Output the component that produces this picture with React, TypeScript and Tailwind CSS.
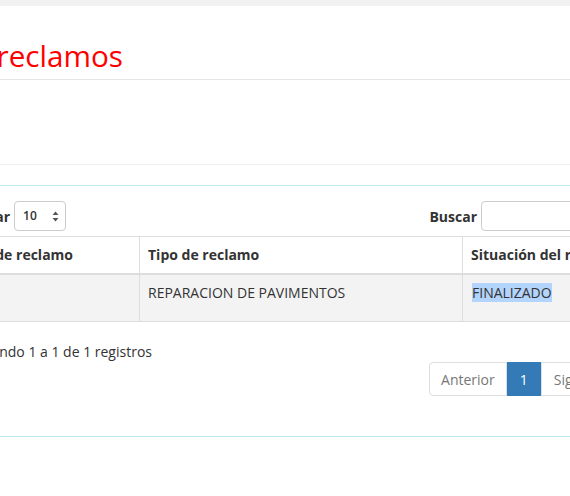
import React from 'react';

// Listado de reclamos - datatable view (cropped viewport)

const font = { fontFamily: '"Open Sans", "Liberation Sans", sans-serif' };

export default function App() {
  return (
    <div className="w-[570px] h-[496px] overflow-hidden bg-white text-[14px] text-[#333] whitespace-nowrap" style={font}>
      {/* top bar */}
      <div className="h-[6px] bg-[#f2f2f2]" />

      {/* title */}
      <div className="h-[74px] border-b border-[#e5e5e5] flex items-end pb-[5px]">
        <h2 className="-ml-[154px] text-[29.7px] leading-[36px] text-[#ff0000]">Listado de reclamos</h2>
      </div>

      <div className="h-[85px] border-b border-[#eeeeee]" />
      <div className="h-[20px]" />

      {/* panel */}
      <div className="border-t border-b border-[#bce8f1] pt-[15px] h-[252px]">
        {/* controls */}
        <div className="flex items-center justify-between h-[30px]">
          <label className="flex items-center gap-[4px] -ml-[46px] font-bold">
            Mostrar
            <span className="relative flex items-center w-[52px] h-[30px] border border-[#ccc] rounded-[4px] pl-[8px] text-[12px] font-semibold">
              10
              <svg className="absolute right-[6px] top-[9px]" width="7" height="11" viewBox="0 0 7 11">
                <path d="M3.5 0.5 L6.5 4 H0.5 Z" fill="#555" />
                <path d="M3.5 10.5 L6.5 7 H0.5 Z" fill="#555" />
              </svg>
            </span>
          </label>
          <label className="flex items-center gap-[4px] font-bold mr-[-119px]">
            Buscar
            <span className="block w-[208px] h-[30px] border border-[#ccc] rounded-[4px]" />
          </label>
        </div>

        {/* table */}
        <div className="mt-[5px]">
          <div className="flex border-t border-[#ddd] border-b-2 border-b-[#ddd] font-bold">
            <div className="shrink-0 w-[214px] -ml-[74px] pl-[8px] py-[8px] leading-[20px] border-r border-[#ddd]">Número de reclamo</div>
            <div className="shrink-0 w-[323px] pl-[8px] py-[8px] leading-[20px] border-r border-[#ddd]">Tipo de reclamo</div>
            <div className="shrink-0 w-[220px] pl-[8px] py-[8px] leading-[20px]">Situación del reclamo</div>
          </div>
          <div className="flex h-[47px] bg-[#f3f3f3] border-b border-[#ddd]">
            <div className="shrink-0 w-[214px] -ml-[74px] pl-[8px] py-[8px] leading-[20px] border-r border-[#ddd]">1024</div>
            <div className="shrink-0 w-[323px] pl-[8px] py-[8px] leading-[20px] border-r border-[#ddd]">REPARACION DE PAVIMENTOS</div>
            <div className="shrink-0 w-[220px] pl-[9px] py-[8px] leading-[20px]">
              <span className="bg-[#b3d4fc]">FINALIZADO</span>
            </div>
          </div>
        </div>

        {/* info + pagination */}
        <div className="mt-[20px] -ml-[47px] leading-[20px]">Mostrando 1 a 1 de 1 registros</div>
        <div className="flex justify-end mr-[-57px]">
          <div className="flex h-[34px] text-[14px]">
            <span className="flex items-center px-[11px] border border-[#ddd] rounded-l-[4px] text-[#777]">Anterior</span>
            <span className="flex items-center px-[12px] bg-[#337ab7] border border-[#337ab7] text-white">1</span>
            <span className="flex items-center px-[12px] border border-[#ddd] rounded-r-[4px] text-[#777]">Siguiente</span>
          </div>
        </div>
      </div>
    </div>
  );
}
